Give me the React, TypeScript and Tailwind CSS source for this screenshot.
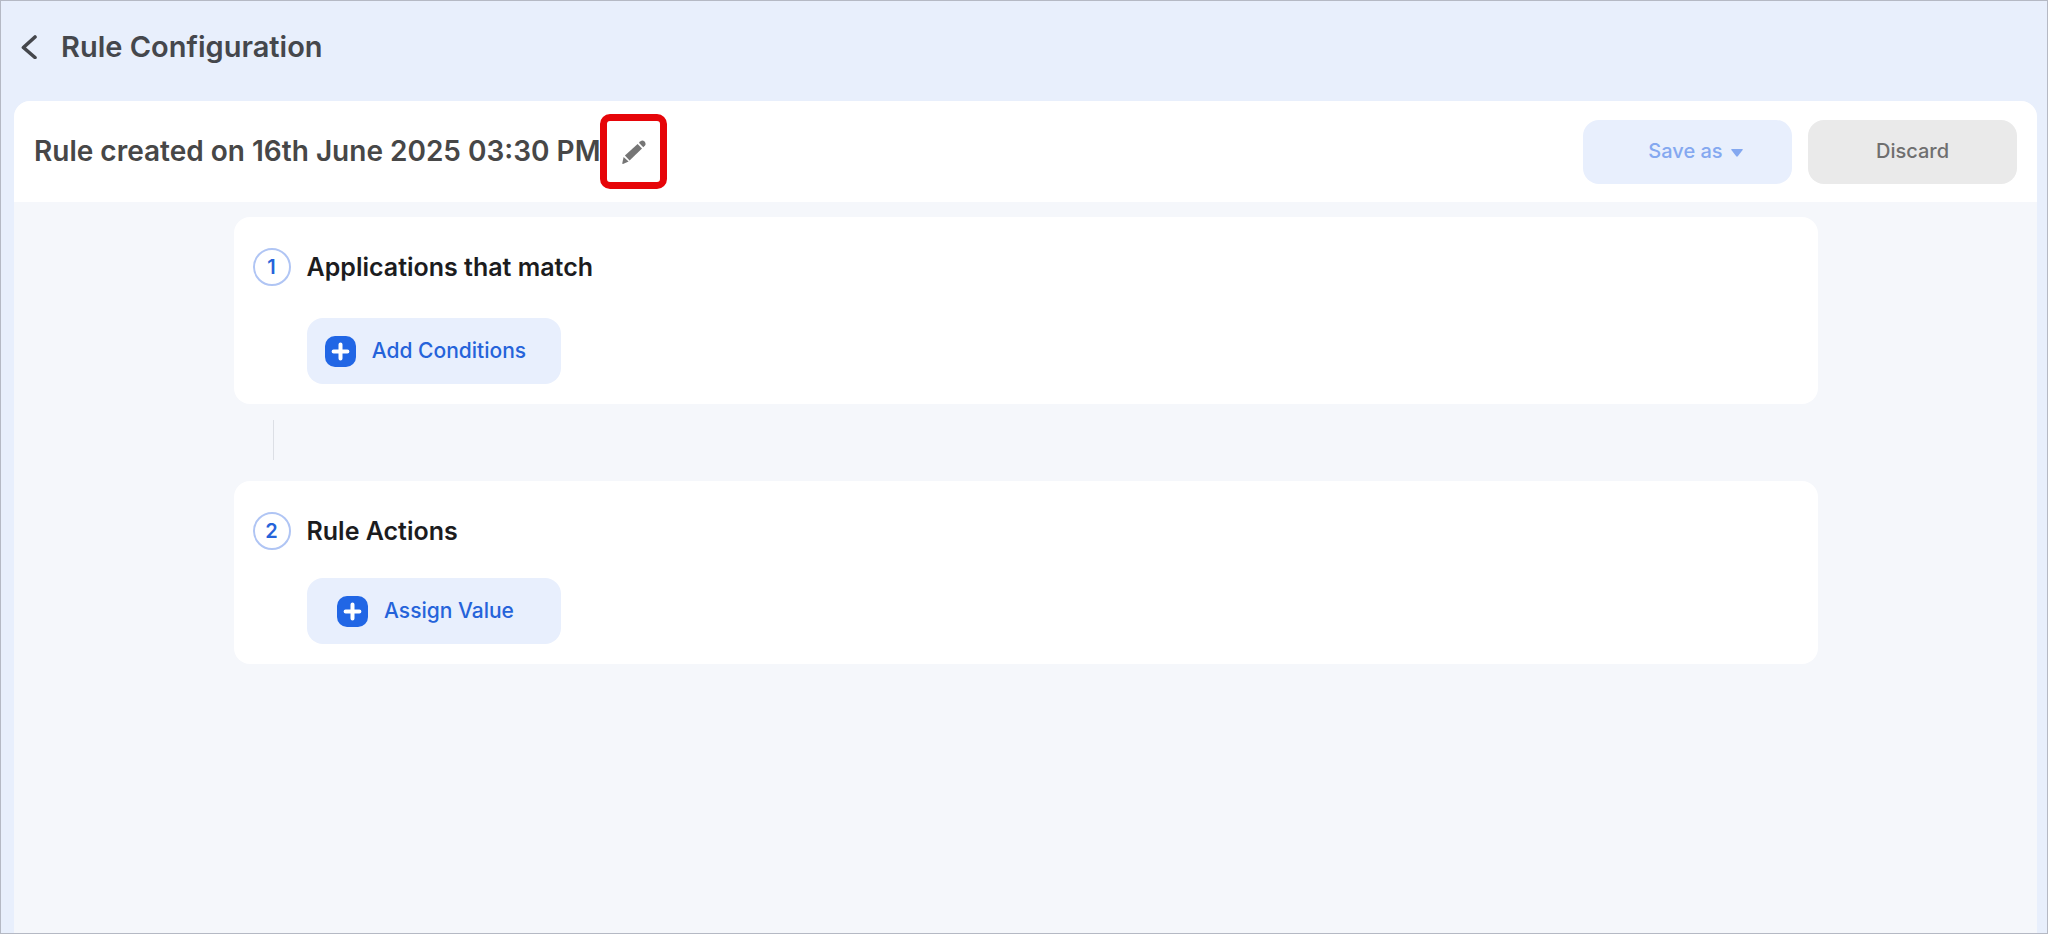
function PlusIcon() {
  return (
    <svg className="h-[31px] w-[31px] shrink-0" viewBox="0 0 31 31" fill="none" aria-hidden="true">
      <rect width="31" height="31" rx="10" fill="#2166e5" />
      <path d="M15.5 8.6v13.8M8.6 15.5h13.8" stroke="#fff" strokeWidth="4" strokeLinecap="round" />
    </svg>
  );
}

function PencilIcon() {
  return (
    <svg className="h-6 w-6" viewBox="0 0 24 24" fill="#757575" aria-hidden="true">
      <path d="M1.6 17 6.6 21.6 1 23.9Q.2 24 .3 23.2Z" />
      <path d="M2.9 15.6 15.6 3.9 20 8.5 7.6 20.5Z" />
      <path d="M16.9 2.8 18.6 1.2Q20.6-.2 22.5 1.6 24.4 3.6 23 5.6L21.3 7.3Z" />
    </svg>
  );
}

type StepCardProps = {
  step: number;
  title: string;
  action: string;
  gap: string;
};

function StepCard({ step, title, action, gap }: StepCardProps) {
  return (
    <section className={`flex flex-col rounded-2xl bg-white px-[19px] pb-5 pt-[31px] ${gap}`}>
      <div className="flex items-center gap-4">
        <div className="flex h-[38px] w-[38px] items-center justify-center rounded-full border-2 border-[#b0c5f4] text-xl leading-6 font-semibold text-[#2563da]">
          {step}
        </div>
        <h2 className="text-[25px] leading-8 font-semibold text-[#1c1c1e]">{title}</h2>
      </div>
      <button
        type="button"
        className="ml-[54px] flex h-[66px] w-[254px] items-center justify-center gap-4 rounded-2xl bg-[#e8effd] pr-4 text-[21px] font-medium text-[#2563da]"
      >
        <PlusIcon />
        {action}
      </button>
    </section>
  );
}

export default function App() {
  return (
    <div className="flex min-h-screen flex-col border border-[#b5b9c4] bg-[#e8effc] font-['Inter','Liberation_Sans',sans-serif]">
      {/* Page header */}
      <header className="flex h-[100px] items-start gap-6 pl-5 pt-7">
        <button type="button" aria-label="Back" className="flex h-9 w-4 items-center">
          <svg className="h-6 w-4" viewBox="0 0 16 24" fill="none" aria-hidden="true">
            <path
              d="M14 2 2.4 12.5 14 22.5"
              stroke="#45474c"
              strokeWidth="3.6"
              strokeLinecap="round"
              strokeLinejoin="round"
            />
          </svg>
        </button>
        <h1 className="text-[29px] leading-9 font-semibold text-[#45474c]">Rule Configuration</h1>
      </header>

      <main className="mr-[10px] ml-[13px] flex flex-1 flex-col overflow-hidden rounded-t-2xl bg-[#f5f7fb]">
        {/* Rule name and actions */}
        <div className="flex items-center justify-between bg-white py-[13px] pr-5 pl-5">
          <div className="flex items-center">
            <p className="pb-0.5 text-[28px] leading-9 font-semibold text-[#474747]">
              Rule created on 16th June 2025 03:30 PM
            </p>
            <button
              type="button"
              aria-label="Edit rule name"
              className="flex h-[75px] w-[67px] items-center justify-center rounded-[10px] border-[7px] border-[#e60509] bg-white"
            >
              <PencilIcon />
            </button>
          </div>
          <div className="flex gap-4">
            <button
              type="button"
              className="flex h-16 w-[209px] items-center justify-center gap-2 rounded-2xl bg-[#e8effd] pb-0.5 pl-4 text-xl font-medium text-[#84a8f0]"
            >
              Save as
              <svg className="mt-1 h-2 w-3" viewBox="0 0 12 8" fill="#84a8f0" aria-hidden="true">
                <path d="M.8 0h10.4q1 .2.4 1L6.8 7.3q-.8.8-1.6 0L.4 1Q-.2.2.8 0Z" />
              </svg>
            </button>
            <button
              type="button"
              className="h-16 w-[209px] rounded-2xl bg-[#eaeaea] pb-0.5 text-xl font-medium text-[#6f6f6f]"
            >
              Discard
            </button>
          </div>
        </div>

        {/* Rule steps */}
        <div className="mx-auto w-full max-w-[1584px] pt-[15px]">
          <StepCard step={1} title="Applications that match" action="Add Conditions" gap="gap-8" />
          <div className="flex h-[77px] pt-4 pl-[39px]">
            <div className="h-10 w-px bg-[#dcdfe5]" />
          </div>
          <StepCard step={2} title="Rule Actions" action="Assign Value" gap="gap-7" />
        </div>
      </main>
    </div>
  );
}
